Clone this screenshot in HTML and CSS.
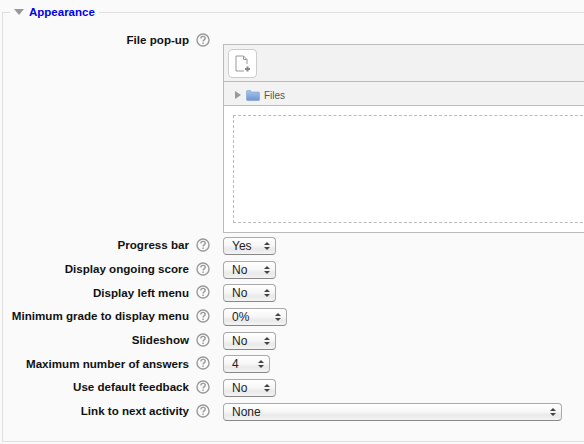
FILE: index.html
```html
<!DOCTYPE html>
<html lang="en">
<head>
    <meta charset="UTF-8">
    <meta name="viewport" content="width=device-width, initial-scale=1.0">
    <title>Appearance</title>
    <link rel="stylesheet" href="styles.css">
</head>
<body>
    <fieldset class="section">
        <legend class="section-title"><span class="collapse-arrow"></span><a href="#">Appearance</a></legend>

        <div class="row row-file">
            <div class="label">File pop-up</div>
            <svg class="help" viewBox="0 0 14 14"><circle cx="7" cy="7" r="6" /><path d="M4.900 5.400c0-1.300 1-2 2.200-2s2.100.7 2.100 1.800c0 1.700-2.100 1.600-2.100 3.200" /><path d="M7.100 9.400v1.500" /></svg>
            <div class="filemanager">
                <div class="fm-toolbar">
                    <div class="fm-button">
                        <svg viewBox="0 0 16 18" width="16" height="18"><path class="doc" d="M12 9V4.500L8.500 1H1v15h8" /><path class="doc" d="M8.500 1v3.500H12" /><path class="plus" d="M10 14h5M12.500 11.500v5" /></svg>
                    </div>
                </div>
                <div class="fm-path">
                    <span class="path-arrow"></span>
                    <svg class="folder" viewBox="0 0 14 11" width="14" height="11"><defs><linearGradient id="fold" x1="0" y1="0" x2="0" y2="1"><stop offset="0" stop-color="#a9c4ea" /><stop offset="1" stop-color="#6d95d3" /></linearGradient></defs><path d="M.5 1.500Q.5.500 1.500.500h3l1 1.500h7q1 0 1 1v6.500q0 1-1 1h-11q-1 0-1-1z" fill="url(#fold)" stroke="#7f9fcf" stroke-width=".6" /></svg>
                    <span class="path-name">Files</span>
                </div>
                <div class="fm-content">
                    <div class="fm-drop"></div>
                </div>
            </div>
        </div>

        <div class="row">
            <div class="label">Progress bar</div>
            <svg class="help" viewBox="0 0 14 14"><circle cx="7" cy="7" r="6" /><path d="M4.900 5.400c0-1.300 1-2 2.200-2s2.100.7 2.100 1.800c0 1.700-2.100 1.600-2.100 3.200" /><path d="M7.100 9.400v1.500" /></svg>
            <div class="select select-yesno"><span>Yes</span><i class="updown"></i></div>
        </div>
        <div class="row">
            <div class="label">Display ongoing score</div>
            <svg class="help" viewBox="0 0 14 14"><circle cx="7" cy="7" r="6" /><path d="M4.900 5.400c0-1.300 1-2 2.200-2s2.100.7 2.100 1.800c0 1.700-2.100 1.600-2.100 3.200" /><path d="M7.100 9.400v1.500" /></svg>
            <div class="select select-yesno"><span>No</span><i class="updown"></i></div>
        </div>
        <div class="row">
            <div class="label">Display left menu</div>
            <svg class="help" viewBox="0 0 14 14"><circle cx="7" cy="7" r="6" /><path d="M4.900 5.400c0-1.300 1-2 2.200-2s2.100.7 2.100 1.800c0 1.700-2.100 1.600-2.100 3.200" /><path d="M7.100 9.400v1.500" /></svg>
            <div class="select select-yesno"><span>No</span><i class="updown"></i></div>
        </div>
        <div class="row">
            <div class="label">Minimum grade to display menu</div>
            <svg class="help" viewBox="0 0 14 14"><circle cx="7" cy="7" r="6" /><path d="M4.900 5.400c0-1.300 1-2 2.200-2s2.100.7 2.100 1.800c0 1.700-2.100 1.600-2.100 3.200" /><path d="M7.100 9.400v1.500" /></svg>
            <div class="select select-grade"><span>0%</span><i class="updown"></i></div>
        </div>
        <div class="row">
            <div class="label">Slideshow</div>
            <svg class="help" viewBox="0 0 14 14"><circle cx="7" cy="7" r="6" /><path d="M4.900 5.400c0-1.300 1-2 2.200-2s2.100.7 2.100 1.800c0 1.700-2.100 1.600-2.100 3.200" /><path d="M7.100 9.400v1.500" /></svg>
            <div class="select select-yesno"><span>No</span><i class="updown"></i></div>
        </div>
        <div class="row">
            <div class="label">Maximum number of answers</div>
            <svg class="help" viewBox="0 0 14 14"><circle cx="7" cy="7" r="6" /><path d="M4.900 5.400c0-1.300 1-2 2.200-2s2.100.7 2.100 1.800c0 1.700-2.100 1.600-2.100 3.200" /><path d="M7.100 9.400v1.500" /></svg>
            <div class="select select-number"><span>4</span><i class="updown"></i></div>
        </div>
        <div class="row">
            <div class="label">Use default feedback</div>
            <svg class="help" viewBox="0 0 14 14"><circle cx="7" cy="7" r="6" /><path d="M4.900 5.400c0-1.300 1-2 2.200-2s2.100.7 2.100 1.800c0 1.700-2.100 1.600-2.100 3.200" /><path d="M7.100 9.400v1.500" /></svg>
            <div class="select select-yesno"><span>No</span><i class="updown"></i></div>
        </div>
        <div class="row">
            <div class="label">Link to next activity</div>
            <svg class="help" viewBox="0 0 14 14"><circle cx="7" cy="7" r="6" /><path d="M4.900 5.400c0-1.300 1-2 2.200-2s2.100.7 2.100 1.800c0 1.700-2.100 1.600-2.100 3.200" /><path d="M7.100 9.400v1.500" /></svg>
            <div class="select select-activity"><span>None</span><i class="updown"></i></div>
        </div>
    </fieldset>
</body>
</html>
```

FILE: styles.css
```css
html, body {
    height: 444px;
    overflow: hidden;
}
body {
    margin: 0;
    background-color: #fafafa;
    font-family: "Liberation Sans", Arial, sans-serif;
    font-size: 12px;
    color: #111;
}
.section {
    box-sizing: border-box;
    width: 640px;
    height: 437px;
    margin: 5px 0 0 2px;
    padding: 0;
    border: 1px solid #dfdfdf;
}
.section-title {
    margin-left: 7px;
    padding: 0 4px;
    display: flex;
    align-items: center;
    height: 14px;
    font-size: 11.5px;
    font-weight: bold;
}
.section-title a {
    color: #0000ee;
    text-decoration: none;
}
.collapse-arrow {
    width: 0;
    height: 0;
    margin-right: 5px;
    border-left: 5px solid transparent;
    border-right: 5px solid transparent;
    border-top: 6px solid #999;
}
.row {
    display: flex;
    align-items: center;
    height: 23.7px;
}
.row-file {
    align-items: flex-start;
    height: 202px;
    margin-top: 13px;
}
.label {
    width: 186px;
    margin-bottom: 2px;
    text-align: right;
    font-size: 11.6px;
    font-weight: bold;
    white-space: nowrap;
}
.row-file .label {
    line-height: 16px;
}
.help {
    flex: none;
    width: 14px;
    height: 14px;
    margin: 0 13px 2px 7px;
    fill: none;
    stroke: #999;
    stroke-width: 1.400;
}
.row-file .help {
    margin-top: 1px;
}
.filemanager {
    box-sizing: border-box;
    flex: none;
    width: 400px;
    height: 189px;
    margin-top: 12px;
    border: 1px solid #bbb;
    background-color: #fff;
    display: flex;
    flex-direction: column;
}
.fm-toolbar {
    height: 37px;
    box-sizing: border-box;
    padding: 4px;
    background-color: #f2f2f2;
    border-bottom: 1px solid #bbb;
}
.fm-button {
    box-sizing: border-box;
    width: 29px;
    height: 29px;
    border: 1px solid #ccc;
    border-radius: 4px;
    background-color: #fff;
    display: flex;
    align-items: center;
    justify-content: center;
}
.doc {
    fill: none;
    stroke: #999;
    stroke-width: 1;
}
.plus {
    fill: none;
    stroke: #888;
    stroke-width: 2;
}
.fm-path {
    height: 24px;
    box-sizing: border-box;
    padding: 3px 0 0 11px;
    background-color: #f2f2f2;
    border-bottom: 1px solid #bbb;
    display: flex;
    align-items: center;
    font-size: 10px;
    color: #555;
}
.path-arrow {
    width: 0;
    height: 0;
    margin-right: 5px;
    border-top: 4px solid transparent;
    border-bottom: 4px solid transparent;
    border-left: 6px solid #999;
}
.path-name {
    margin-left: 4px;
}
.fm-content {
    flex: 1;
    padding: 9px;
    display: flex;
}
.fm-drop {
    flex: 1;
    border: 1px dashed #bbb;
}
.select {
    box-sizing: border-box;
    flex: none;
    height: 18px;
    padding: 0 5px 0 8px;
    border: 1px solid #aaa;
    border-bottom-color: #888;
    border-radius: 4px;
    background: linear-gradient(#fff, #f7f7f7 45%, #e9e9e9 70%, #f4f4f4);
    display: flex;
    align-items: center;
    justify-content: space-between;
    font-size: 12px;
    color: #222;
}
.select-yesno {
    width: 53px;
}
.select-grade {
    width: 64px;
}
.select-number {
    width: 47px;
}
.select-activity {
    width: 339px;
}
/* the stacked up and down arrows of a native select */
.updown {
    display: flex;
    flex-direction: column;
    gap: 2px;
}
.updown::before,
.updown::after {
    content: "";
    width: 0;
    height: 0;
    border-left: 3px solid transparent;
    border-right: 3px solid transparent;
}
.updown::before {
    border-bottom: 3px solid #444;
}
.updown::after {
    border-top: 3px solid #444;
}
```
